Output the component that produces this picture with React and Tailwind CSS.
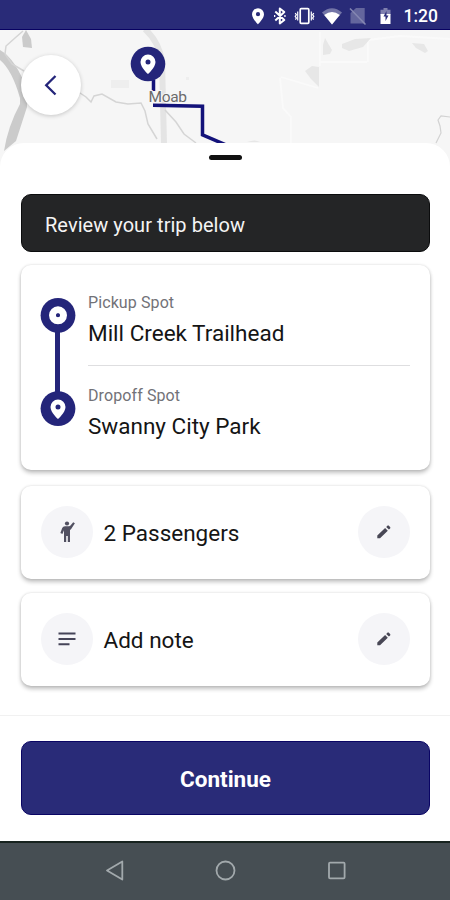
import React from "react";

const NAVY = "#292b78";

function StatusBar() {
  return (
    <header className="flex h-[30px] items-center border-b border-[#080262] bg-[#292b78]">
      <svg width="450" height="29" viewBox="0 0 450 29" fill="#fff">
        <path fillRule="evenodd" d="M258 8.2a6 6 0 0 0-6 6c0 4.300 6 10 6 10s6-5.700 6-10a6 6 0 0 0-6-6zm0 3.900a2.100 2.100 0 1 1 0 4.200 2.100 2.100 0 0 1 0-4.200z" />
        <path d="M275.300 11.500l9 8.500-4.500 3.500V8.500l4.500 3.500-9 8.500" fill="none" stroke="#fff" strokeWidth="2" strokeLinejoin="round" />
        <path d="M274 16h1.300M284.300 16h1.300" stroke="#fff" strokeWidth="2" />
        <rect x="300.200" y="8.700" width="8.600" height="14.600" rx="1" fill="none" stroke="#fff" strokeWidth="1.700" />
        <path d="M297.700 11.500v9M311.300 11.500v9M295.200 13l1.200 1.800-1.200 1.500 1.200 1.800-1 1.500M313.800 13l-1.200 1.800 1.200 1.500-1.200 1.800 1 1.500" fill="none" stroke="#fff" strokeWidth="1.200" />
        <path d="M322 12.500q10-8.500 20 0L332 24.500z" opacity=".35" />
        <path d="M324.200 15q7.800-6 15.600 0L332 24.500z" />
        <path d="M350.500 13l5.500-5h8.700v15.500h-14.200z" opacity=".28" />
        <path d="M350 8.500l15.500 16" stroke="#8587b2" strokeWidth="1.500" />
        <path d="M383.500 8h4v1.700h3V15h-10V9.700h3z" opacity=".4" />
        <path d="M380.500 14h10v10h-10z" />
        <path d="M386.500 11l-3 5.500h2V21l3-5.500h-2z" fill={NAVY} />
        <text x="403.500" y="22.300" fontFamily="Roboto, sans-serif" fontSize="17.500" fontWeight="500" textLength="34.500">1:20</text>
      </svg>
    </header>
  );
}

function RouteMap() {
  return (
    <svg className="block shrink-0" width="450" height="137" viewBox="0 30 450 137">
      <rect y="30" width="450" height="137" fill="#f6f6f6" />
      <path d="M291 143v-26l-8-9-3-30M281 77l37 11M320 32v34M320 62h47M368 62V40M368 40l32-4 50 3" fill="none" stroke="#fafafa" strokeWidth="1.800" />
      <path d="M145 29q14 13 17 32l2 83" fill="none" stroke="#e4e4e4" strokeWidth="6" />
      <path d="M0 50Q16 59 27 90L27 107 16 141 4 151Q8 126 20 104L20 98Q12 70 0 60z" fill="#cbcbcb" />
      <path d="M5 54l1-8 9-8 8-7M5 54l7 10 12 7M80 93l6 4 5 5 3-6 8-2 14 8 12 2 13-1 4 8 3 13 9 15M165 110l11 12 8 12 12 9" fill="none" stroke="#d5d5d5" strokeWidth="1.500" />
      <path d="M22 37l4-7 5 9 1 9-9-1z" fill="#cbcbcb" />
      <path d="M111 80h18v8h-18zM186 77h3v3h-3z" fill="#eee" />
      <path d="M325 38l4 7 3 5-2 4-7 1v-10zM342 44l13-5 16-1-8 9-14 4-7-3zM412 43l12 1 4 7-3 2-9-5zM305 71l7-5 7 1v20l-8-8zM247 142q8-3 13 0z" fill="#e7e7e7" />
      <path d="M450 117l-9-1-3 4 2 6 1 7-5 10" fill="none" stroke="#d2d2d2" strokeWidth="1.200" />
      <path d="M153.500 80v11M153 105.300l49.500 1v28.500l28 12" fill="none" stroke="#13127a" strokeWidth="3.500" />
      <circle cx="148" cy="64" r="17.300" fill="#24257a" />
      <path fillRule="evenodd" d="M148 54.500a7.500 7.500 0 0 0-7.500 7.500c0 5.500 7.500 12 7.500 12s7.500-6.500 7.500-12a7.500 7.500 0 0 0-7.500-7.500zm0 5a2.500 2.500 0 1 1 0 5 2.500 2.500 0 0 1 0-5z" fill="#fff" />
      <text x="148.500" y="101.800" fontFamily="Roboto, sans-serif" fontSize="15.500" fill="#6b6b6b" stroke="#f6f6f6" strokeWidth="2" paintOrder="stroke" textLength="38.500">Moab</text>
    </svg>
  );
}

function RouteLine() {
  return (
    <svg className="block shrink-0" width="36" height="130" viewBox="0 0 36 130">
      <path d="M17.500 30v70" stroke="#24257a" strokeWidth="5" />
      <circle cx="18" cy="18.300" r="17.400" fill="#24257a" />
      <circle cx="18" cy="18.300" r="5.500" fill="none" stroke="#fff" strokeWidth="7" />
      <circle cx="18" cy="18.300" r="1.800" fill="#24257a" />
      <circle cx="18" cy="111.600" r="17.400" fill="#24257a" />
      <path fillRule="evenodd" d="M18 102.500a7.500 7.500 0 0 0-7.500 7.500c0 5.500 7.500 12 7.500 12s7.500-6.500 7.500-12a7.500 7.500 0 0 0-7.500-7.500zm0 5a2.500 2.500 0 1 1 0 5 2.500 2.500 0 0 1 0-5z" fill="#fff" />
    </svg>
  );
}

function Stop({ label, place }) {
  return (
    <div>
      <p className="text-[16px] leading-5 tracking-[0.1px] text-[#727278]">{label}</p>
      <p className="mt-[6px] text-[22.500px] leading-7 text-[#151515]">{place}</p>
    </div>
  );
}

function PersonIcon() {
  return (
    <svg width="24" height="24" viewBox="0 0 24 24" fill="#515061">
      <circle cx="12" cy="3.500" r="2.100" />
      <path d="M18.200 2.200l1.700 1.100-3.900 6-1 .7v12h-2.200v-6h-1.600v6H9V10.200l-1.600 3.700-2-.8L7.200 8Q8 6.300 10 6.300h4q1 0 1.700-1z" />
    </svg>
  );
}

function NoteIcon() {
  return (
    <svg width="24" height="24" viewBox="0 0 24 24" stroke="#454458" strokeWidth="2">
      <path d="M3.500 6.500h17M3.500 12h17M3.500 17.200h11" />
    </svg>
  );
}

function PencilIcon() {
  return (
    <svg width="18" height="18" viewBox="0 0 18 18" fill="#484755">
      <path d="M2.300 12.600l7.800-7.600 2.700 2.700-7.800 7.600H2.300zM11.200 3.900l1.200-1.200q.7-.7 1.400 0l1.300 1.300q.6.700 0 1.400l-1.200 1.200z" />
    </svg>
  );
}

const CARD = "rounded-[10px] bg-white shadow-[0_3px_4px_rgba(0,0,0,0.24),0_0_3px_rgba(0,0,0,0.14)]";
const DISC = "flex size-[52px] shrink-0 items-center justify-center rounded-full bg-[#f5f5f8]";

function OptionCard({ icon, label, spacing }) {
  return (
    <div className={`flex h-[93px] items-center pb-px pl-[19.500px] pr-5 ${spacing} ${CARD}`}>
      <span className={DISC}>{icon}</span>
      <span className="ml-[11px] flex-1 pt-[2px] text-[22.500px] leading-7 text-[#151515]">{label}</span>
      <button className={DISC} aria-label="Edit"><PencilIcon /></button>
    </div>
  );
}

export default function App() {
  return (
    <div className="flex h-[900px] w-[450px] flex-col overflow-hidden bg-white font-[Roboto,sans-serif]">
      <StatusBar />
      <div className="relative shrink-0">
        <RouteMap />
        <button aria-label="Back" className="absolute left-[20.500px] top-[25px] flex size-[60px] items-center justify-center rounded-full bg-white shadow-[0_1px_4px_rgba(0,0,0,0.2)]">
          <svg width="24" height="24" viewBox="0 0 24 24" fill="none" stroke="#24257a" strokeWidth="2.300">
            <path d="M16.500 3L7.200 12.200l9.300 9.300" />
          </svg>
        </button>
      </div>
      <main className="relative -mt-[24px] h-[572px] shrink-0 rounded-t-[24px] bg-white pl-[21px] pr-5">
        <div className="mx-auto h-[17px] w-[33px] pt-[12px]">
          <div className="h-[5px] rounded-sm bg-[#111]" />
        </div>
        <div className="mt-[34px] flex h-[58px] items-center rounded-[10px] border border-[#0b0c0d] bg-[#242526] px-[23px] pt-[3px] text-[20px] tracking-[0.05px] text-[#f4f4f4]">
          Review your trip below
        </div>
        <section className={`mt-[13px] flex h-[205px] gap-3 pl-[19px] pr-5 pt-[32px] ${CARD}`}>
          <RouteLine />
          <div className="flex-1">
            <div className="-mt-[4px]">
              <Stop label="Pickup Spot" place="Mill Creek Trailhead" />
            </div>
            <div className="mt-[18px] border-t border-[#dedee0] pt-[20px]">
              <Stop label="Dropoff Spot" place="Swanny City Park" />
            </div>
          </div>
        </section>
        <OptionCard spacing="mt-[16px]" icon={<PersonIcon />} label="2 Passengers" />
        <OptionCard spacing="mt-[14px]" icon={<NoteIcon />} label="Add note" />
      </main>
      <footer className="h-[126px] shrink-0 border-t border-[#f1f1f1] pl-[21px] pr-5 pt-[25px]">
        <button className="h-[74px] w-full rounded-[10px] border border-[#0a0564] bg-[#292b78] pt-[3px] text-[22.500px] font-bold text-white">Continue</button>
      </footer>
      <nav className="flex h-[59px] shrink-0 items-center border-t-2 border-[#17231f] bg-[#464e53]">
        <svg width="450" height="57" viewBox="0 843 450 57" fill="none" stroke="#a2a9ac" strokeWidth="1.800">
          <path d="M122.300 861.500v18l-15.300-9z" strokeLinejoin="round" />
          <circle cx="225.500" cy="870.500" r="9" />
          <rect x="329" y="862.700" width="15.600" height="15.600" rx="1" />
        </svg>
      </nav>
    </div>
  );
}
